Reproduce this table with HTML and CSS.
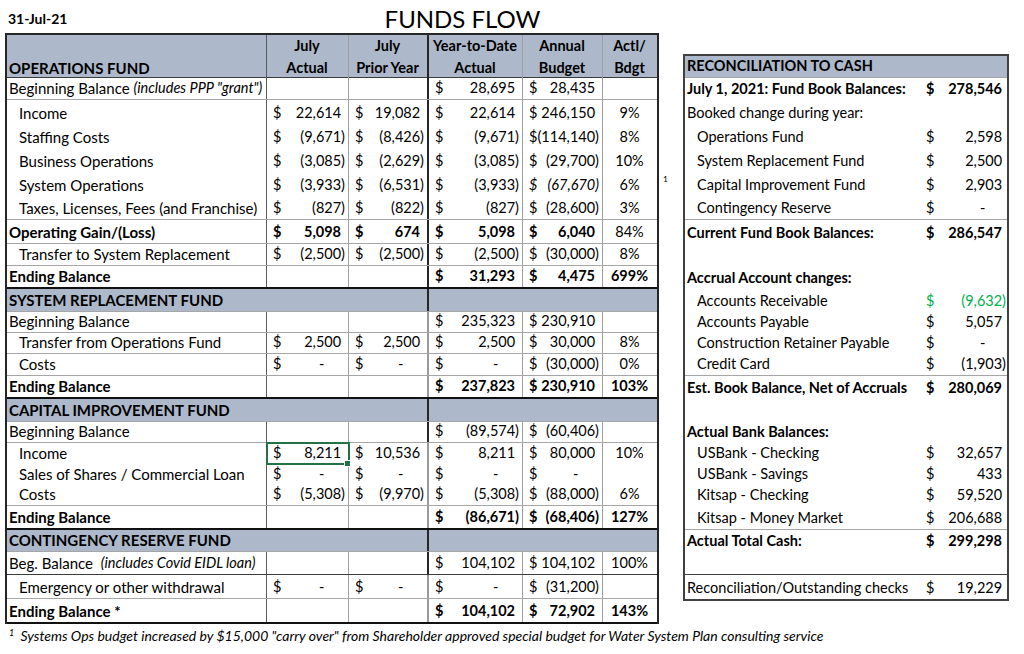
FILE: index.html
```html
<!DOCTYPE html>
<html lang="en">
<head>
<meta charset="utf-8">
<title>Funds Flow</title>
<link rel="stylesheet" href="styles.css">
</head>
<body>
<div class="page">
  <div class="top">
    <div class="date">31-Jul-21</div>
    <h1 class="title">FUNDS FLOW</h1>
  </div>

  <div class="main">
    <div class="ledger">
      <!-- OPERATIONS FUND -->
      <div class="row head h43 bb-d">
        <div class="c lab b">OPERATIONS FUND</div>
        <div class="c ch">July<br>Actual</div>
        <div class="c ch">July<br>Prior Year</div>
        <div class="c ch">Year-to-Date<br>Actual</div>
        <div class="c ch">Annual<br>Budget</div>
        <div class="c ch">Actl/<br>Bdgt</div>
      </div>
      <div class="row h22 bb-g">
        <div class="c lab">Beginning Balance&nbsp;<i>(includes PPP "grant")</i></div>
        <div class="c"></div>
        <div class="c"></div>
        <div class="c n"><span>$</span><span class="p">28,695</span></div>
        <div class="c n"><span>$</span><span class="p">28,435</span></div>
        <div class="c"></div>
      </div>
      <div class="row h24">
        <div class="c lab ind">Income</div>
        <div class="c n"><span>$</span><span class="p">22,614</span></div>
        <div class="c n"><span>$</span><span class="p">19,082</span></div>
        <div class="c n"><span>$</span><span class="p">22,614</span></div>
        <div class="c n"><span>$</span><span class="p">246,150</span></div>
        <div class="c pct">9%</div>
      </div>
      <div class="row h24">
        <div class="c lab ind">Staffing Costs</div>
        <div class="c n"><span>$</span><span>(9,671)</span></div>
        <div class="c n"><span>$</span><span>(8,426)</span></div>
        <div class="c n"><span>$</span><span>(9,671)</span></div>
        <div class="c n"><span>$</span><span>(114,140)</span></div>
        <div class="c pct">8%</div>
      </div>
      <div class="row h24">
        <div class="c lab ind">Business Operations</div>
        <div class="c n"><span>$</span><span>(3,085)</span></div>
        <div class="c n"><span>$</span><span>(2,629)</span></div>
        <div class="c n"><span>$</span><span>(3,085)</span></div>
        <div class="c n"><span>$</span><span>(29,700)</span></div>
        <div class="c pct">10%</div>
      </div>
      <div class="row h24">
        <div class="c lab ind">System Operations</div>
        <div class="c n"><span>$</span><span>(3,933)</span></div>
        <div class="c n"><span>$</span><span>(6,531)</span></div>
        <div class="c n"><span>$</span><span>(3,933)</span></div>
        <div class="c n it"><span>$</span><span>(67,670)</span></div>
        <div class="c pct">6%</div>
      </div>
      <div class="row h24 bb-g">
        <div class="c lab ind">Taxes, Licenses, Fees (and Franchise)</div>
        <div class="c n"><span>$</span><span>(827)</span></div>
        <div class="c n"><span>$</span><span>(822)</span></div>
        <div class="c n"><span>$</span><span>(827)</span></div>
        <div class="c n"><span>$</span><span>(28,600)</span></div>
        <div class="c pct">3%</div>
      </div>
      <div class="row h24 bb-g">
        <div class="c lab b">Operating Gain/(Loss)</div>
        <div class="c n b"><span>$</span><span class="p">5,098</span></div>
        <div class="c n b"><span>$</span><span class="p">674</span></div>
        <div class="c n b"><span>$</span><span class="p">5,098</span></div>
        <div class="c n b"><span>$</span><span class="p">6,040</span></div>
        <div class="c pct">84%</div>
      </div>
      <div class="row h22 bb-g">
        <div class="c lab ind">Transfer to System Replacement</div>
        <div class="c n"><span>$</span><span>(2,500)</span></div>
        <div class="c n"><span>$</span><span>(2,500)</span></div>
        <div class="c n"><span>$</span><span>(2,500)</span></div>
        <div class="c n"><span>$</span><span>(30,000)</span></div>
        <div class="c pct">8%</div>
      </div>
      <div class="row h23 bb-k">
        <div class="c lab b">Ending Balance</div>
        <div class="c"></div>
        <div class="c"></div>
        <div class="c n b"><span>$</span><span class="p">31,293</span></div>
        <div class="c n b"><span>$</span><span class="p">4,475</span></div>
        <div class="c pct b">699%</div>
      </div>

      <!-- SYSTEM REPLACEMENT FUND -->
      <div class="row sec h23 bb-g">
        <div class="c lab b">SYSTEM REPLACEMENT FUND</div>
        <div class="c"></div>
      </div>
      <div class="row lt h21 bb-g">
        <div class="c lab">Beginning Balance</div>
        <div class="c"></div>
        <div class="c"></div>
        <div class="c n"><span>$</span><span class="p">235,323</span></div>
        <div class="c n"><span>$</span><span class="p">230,910</span></div>
        <div class="c"></div>
      </div>
      <div class="row lt h21 bb-g">
        <div class="c lab ind">Transfer from Operations Fund</div>
        <div class="c n"><span>$</span><span class="p">2,500</span></div>
        <div class="c n"><span>$</span><span class="p">2,500</span></div>
        <div class="c n"><span>$</span><span class="p">2,500</span></div>
        <div class="c n"><span>$</span><span class="p">30,000</span></div>
        <div class="c pct">8%</div>
      </div>
      <div class="row lt h22 bb-g">
        <div class="c lab ind">Costs</div>
        <div class="c n"><span>$</span><span class="z">-</span></div>
        <div class="c n"><span>$</span><span class="z">-</span></div>
        <div class="c n"><span>$</span><span class="z">-</span></div>
        <div class="c n"><span>$</span><span>(30,000)</span></div>
        <div class="c pct">0%</div>
      </div>
      <div class="row lt h23 bb-k">
        <div class="c lab b">Ending Balance</div>
        <div class="c"></div>
        <div class="c"></div>
        <div class="c n b"><span>$</span><span class="p">237,823</span></div>
        <div class="c n b"><span>$</span><span class="p">230,910</span></div>
        <div class="c pct b">103%</div>
      </div>

      <!-- CAPITAL IMPROVEMENT FUND -->
      <div class="row sec h23 bb-g">
        <div class="c lab b">CAPITAL IMPROVEMENT FUND</div>
        <div class="c"></div>
      </div>
      <div class="row h21 bb-g">
        <div class="c lab">Beginning Balance</div>
        <div class="c"></div>
        <div class="c"></div>
        <div class="c n"><span>$</span><span>(89,574)</span></div>
        <div class="c n"><span>$</span><span>(60,406)</span></div>
        <div class="c"></div>
      </div>
      <div class="row lt h21">
        <div class="c lab ind">Income</div>
        <div class="c n sel"><span>$</span><span class="p">8,211</span></div>
        <div class="c n"><span>$</span><span class="p">10,536</span></div>
        <div class="c n"><span>$</span><span class="p">8,211</span></div>
        <div class="c n"><span>$</span><span class="p">80,000</span></div>
        <div class="c pct">10%</div>
      </div>
      <div class="row lt h21">
        <div class="c lab ind">Sales of Shares / Commercial Loan</div>
        <div class="c n"><span>$</span><span class="z">-</span></div>
        <div class="c n"><span>$</span><span class="z">-</span></div>
        <div class="c n"><span>$</span><span class="z">-</span></div>
        <div class="c n"><span>$</span><span class="z">-</span></div>
        <div class="c"></div>
      </div>
      <div class="row lt h21 bb-g">
        <div class="c lab ind">Costs</div>
        <div class="c n"><span>$</span><span>(5,308)</span></div>
        <div class="c n"><span>$</span><span>(9,970)</span></div>
        <div class="c n"><span>$</span><span>(5,308)</span></div>
        <div class="c n"><span>$</span><span>(88,000)</span></div>
        <div class="c pct">6%</div>
      </div>
      <div class="row lt h24 bb-k">
        <div class="c lab b">Ending Balance</div>
        <div class="c"></div>
        <div class="c"></div>
        <div class="c n b"><span>$</span><span>(86,671)</span></div>
        <div class="c n b"><span>$</span><span>(68,406)</span></div>
        <div class="c pct b">127%</div>
      </div>

      <!-- CONTINGENCY RESERVE FUND -->
      <div class="row sec h22 bb-g">
        <div class="c lab b">CONTINGENCY RESERVE FUND</div>
        <div class="c"></div>
      </div>
      <div class="row h23 bb-d">
        <div class="c lab">Beg. Balance&nbsp;&nbsp; <i>(includes Covid EIDL loan)</i></div>
        <div class="c"></div>
        <div class="c"></div>
        <div class="c n"><span>$</span><span class="p">104,102</span></div>
        <div class="c n"><span>$</span><span class="p">104,102</span></div>
        <div class="c pct">100%</div>
      </div>
      <div class="row lt h24 bb-g">
        <div class="c lab ind">Emergency or other withdrawal</div>
        <div class="c n"><span>$</span><span class="z">-</span></div>
        <div class="c n"><span>$</span><span class="z">-</span></div>
        <div class="c n"><span>$</span><span class="z">-</span></div>
        <div class="c n"><span>$</span><span>(31,200)</span></div>
        <div class="c"></div>
      </div>
      <div class="row lt h25 bb-k">
        <div class="c lab b">Ending Balance *</div>
        <div class="c"></div>
        <div class="c"></div>
        <div class="c n b"><span>$</span><span class="p">104,102</span></div>
        <div class="c n b"><span>$</span><span class="p">72,902</span></div>
        <div class="c pct b">143%</div>
      </div>
    </div>

    <div class="note"><sup>1</sup></div>

    <div class="recon">
      <div class="rrow rhead h22 bb-g"><div class="c lab b">RECONCILIATION TO CASH</div></div>
      <div class="rrow h22">
        <div class="c lab b">July 1, 2021: Fund Book Balances:</div>
        <div class="c rv b"><span>$</span><span class="p">278,546</span></div>
      </div>
      <div class="rrow h24">
        <div class="c lab">Booked change during year:</div>
        <div class="c"></div>
      </div>
      <div class="rrow h24">
        <div class="c lab ind">Operations Fund</div>
        <div class="c rv"><span>$</span><span class="p">2,598</span></div>
      </div>
      <div class="rrow h24">
        <div class="c lab ind">System Replacement Fund</div>
        <div class="c rv"><span>$</span><span class="p">2,500</span></div>
      </div>
      <div class="rrow h24">
        <div class="c lab ind">Capital Improvement Fund</div>
        <div class="c rv"><span>$</span><span class="p">2,903</span></div>
      </div>
      <div class="rrow h24 bb-g">
        <div class="c lab ind">Contingency Reserve</div>
        <div class="c rv"><span>$</span><span class="z">-</span></div>
      </div>
      <div class="rrow h24">
        <div class="c lab b">Current Fund Book Balances:</div>
        <div class="c rv b"><span>$</span><span class="p">286,547</span></div>
      </div>
      <div class="rrow h22"><div class="c"></div><div class="c"></div></div>
      <div class="rrow h23">
        <div class="c lab b">Accrual Account changes:</div>
        <div class="c"></div>
      </div>
      <div class="rrow h23">
        <div class="c lab ind">Accounts Receivable</div>
        <div class="c rv green"><span>$</span><span>(9,632)</span></div>
      </div>
      <div class="rrow h21">
        <div class="c lab ind">Accounts Payable</div>
        <div class="c rv"><span>$</span><span class="p">5,057</span></div>
      </div>
      <div class="rrow h21">
        <div class="c lab ind">Construction Retainer Payable</div>
        <div class="c rv"><span>$</span><span class="z">-</span></div>
      </div>
      <div class="rrow h22 bb-g">
        <div class="c lab ind">Credit Card</div>
        <div class="c rv"><span>$</span><span>(1,903)</span></div>
      </div>
      <div class="rrow h23">
        <div class="c lab b">Est. Book Balance, Net of Accruals</div>
        <div class="c rv b"><span>$</span><span class="p">280,069</span></div>
      </div>
      <div class="rrow h23"><div class="c"></div><div class="c"></div></div>
      <div class="rrow h21">
        <div class="c lab b">Actual Bank Balances:</div>
        <div class="c"></div>
      </div>
      <div class="rrow h21">
        <div class="c lab ind">USBank - Checking</div>
        <div class="c rv"><span>$</span><span class="p">32,657</span></div>
      </div>
      <div class="rrow h21">
        <div class="c lab ind">USBank - Savings</div>
        <div class="c rv"><span>$</span><span class="p">433</span></div>
      </div>
      <div class="rrow h21">
        <div class="c lab ind">Kitsap - Checking</div>
        <div class="c rv"><span>$</span><span class="p">59,520</span></div>
      </div>
      <div class="rrow h24 bb-g">
        <div class="c lab ind">Kitsap - Money Market</div>
        <div class="c rv"><span>$</span><span class="p">206,688</span></div>
      </div>
      <div class="rrow h22">
        <div class="c lab b">Actual Total Cash:</div>
        <div class="c rv b"><span>$</span><span class="p">299,298</span></div>
      </div>
      <div class="rrow h23 bb-d"><div class="c"></div><div class="c"></div></div>
      <div class="rrow h24">
        <div class="c lab">Reconciliation/Outstanding checks</div>
        <div class="c rv"><span>$</span><span class="p">19,229</span></div>
      </div>
    </div>
  </div>

  <p class="foot"><sup>1</sup> Systems Ops budget increased by $15,000 "carry over" from Shareholder approved special budget for Water System Plan consulting service</p>
</div>
</body>
</html>
```

FILE: styles.css
```css
html, body {
  margin: 0;
  padding: 0;
  background: #ffffff;
}

body {
  font-family: Lato, "Open Sans", "DejaVu Sans", sans-serif;
  font-size: 14.5px;
  color: #000000;
}

.page {
  padding-left: 5px;
}

/* title strip */
.top {
  display: flex;
  height: 33px;
}

.date {
  width: 261px;
  box-sizing: border-box;
  padding: 11px 0 0 3px;
  font-weight: 700;
  font-size: 14px;
  line-height: 16px;
}

.title {
  width: 393px;
  margin: 0;
  padding-top: 4px;
  text-align: center;
  font-weight: 400;
  font-size: 24px;
  line-height: 30px;
}

/* main area */
.main {
  display: flex;
  align-items: flex-start;
}

.ledger {
  width: 654px;
  box-sizing: border-box;
  border: 2px solid #262626;
  border-bottom: none;
}

.row {
  display: grid;
  grid-template-columns: 260px 82px 80px 94px 80px 54px;
  box-sizing: border-box;
}

.h21 { height: 21px; }
.h22 { height: 22px; }
.h23 { height: 23px; }
.h24 { height: 24px; }
.h25 { height: 25px; }
.h43 { height: 43px; }

.bb-g { border-bottom: 1px solid #a6a6a6; }
.bb-d { border-bottom: 1px solid #3c3c3c; }
.bb-k { border-bottom: 2px solid #111111; }

.c {
  box-sizing: border-box;
  display: flex;
  align-items: flex-end;
  padding: 0 3px 2px 2px;
  line-height: 18px;
  white-space: nowrap;
  border-right: 1px solid #a0a0a0;
  min-width: 0;
}

.row > :first-child { border-right-color: #5a5a5a; }
.row > :nth-child(3) { border-right: 2px solid #262626; }
.row.lt > :nth-child(3) { border-right-color: #9a9a9a; }
.row > :nth-child(6) { border-right: none; }

.row > .lab { font-size: 15px; }

.head { background: #adb9ca; }

.sec { background: #adb9ca; }
.sec > :first-child {
  grid-column: span 3;
  border-right: 2px solid #262626;
}
.sec > :last-child {
  grid-column: span 3;
  border-right: none;
}

.lab { padding-left: 2px; }
.ind { padding-left: 12px; }
.b { font-weight: 700; }
.it { font-style: italic; }
.lab i { font-size: 14.5px; }

.ch {
  flex-direction: column;
  justify-content: flex-end;
  align-items: center;
  text-align: center;
  font-weight: 700;
  line-height: 22px;
  padding-bottom: 0;
}

.n {
  justify-content: space-between;
  padding-left: 6px;
  padding-right: 3px;
}

.p::after {
  content: ")";
  visibility: hidden;
}

.z::after {
  content: "00)";
  visibility: hidden;
}

.pct { justify-content: center; }

/* excel active cell */
.sel {
  position: relative;
  outline: 2px solid #217346;
  outline-offset: -1px;
}
.sel::after {
  content: "";
  position: absolute;
  right: -3px;
  bottom: -3px;
  width: 5px;
  height: 5px;
  background: #217346;
  border: 1px solid #ffffff;
  z-index: 2;
}

/* footnote marker column */
.note {
  width: 24px;
  box-sizing: border-box;
  padding: 139px 0 0 4px;
  font-size: 10px;
  line-height: 12px;
}
.note sup {
  vertical-align: baseline;
}

/* reconciliation box */
.recon {
  width: 326px;
  margin-top: 21px;
  box-sizing: border-box;
  border: 2px solid #404040;
}

.rrow {
  display: grid;
  grid-template-columns: 235px 87px;
  box-sizing: border-box;
}

.rrow > .c { border-right: none; }

.rhead { background: #adb9ca; }
.rhead > :first-child { grid-column: span 2; }

.rv {
  justify-content: space-between;
  padding-left: 6px;
  padding-right: 1px;
}

.green { color: #00b050; }

/* footnote */
.foot {
  margin: 0;
  padding: 3px 0 0 4px;
  font-style: italic;
  font-size: 14px;
  line-height: 17px;
}
.foot sup {
  font-size: 9px;
  vertical-align: 5px;
  line-height: 0;
  margin-right: 3px;
}
```
